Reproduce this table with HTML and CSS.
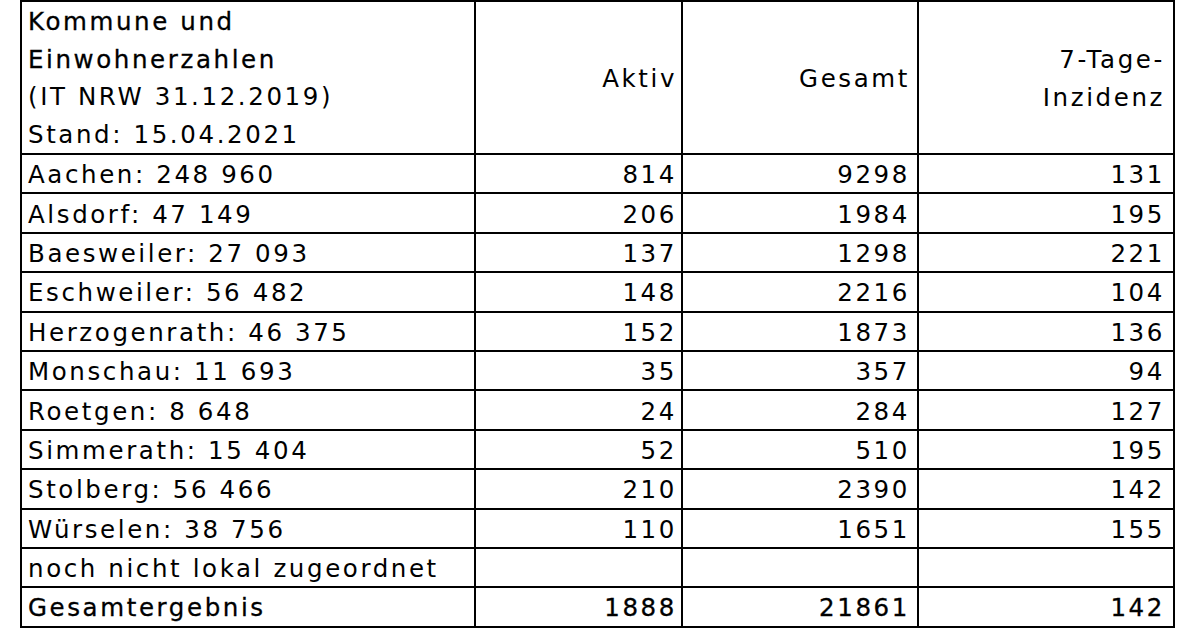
FILE: index.html
```html
<!DOCTYPE html>
<html lang="de">
<head>
<meta charset="utf-8">
<title>Corona-Fälle StädteRegion Aachen</title>
<link rel="stylesheet" href="styles.css">
</head>
<body>
<table class="cases">
  <colgroup>
    <col class="c-name">
    <col class="c-aktiv">
    <col class="c-gesamt">
    <col class="c-inz">
  </colgroup>
  <thead>
    <tr class="head">
      <th class="name"><span class="strong">Kommune und<br>Einwohnerzahlen</span><br>(IT NRW 31.12.2019)<br>Stand: 15.04.2021</th>
      <th class="num">Aktiv</th>
      <th class="num">Gesamt</th>
      <th class="num">7-Tage-<br>Inzidenz</th>
    </tr>
  </thead>
  <tbody>
    <tr><td class="name">Aachen: 248 960</td><td class="num">814</td><td class="num">9298</td><td class="num">131</td></tr>
    <tr><td class="name">Alsdorf: 47 149</td><td class="num">206</td><td class="num">1984</td><td class="num">195</td></tr>
    <tr><td class="name">Baesweiler: 27 093</td><td class="num">137</td><td class="num">1298</td><td class="num">221</td></tr>
    <tr><td class="name">Eschweiler: 56 482</td><td class="num">148</td><td class="num">2216</td><td class="num">104</td></tr>
    <tr><td class="name">Herzogenrath: 46 375</td><td class="num">152</td><td class="num">1873</td><td class="num">136</td></tr>
    <tr><td class="name">Monschau: 11 693</td><td class="num">35</td><td class="num">357</td><td class="num">94</td></tr>
    <tr><td class="name">Roetgen: 8 648</td><td class="num">24</td><td class="num">284</td><td class="num">127</td></tr>
    <tr><td class="name">Simmerath: 15 404</td><td class="num">52</td><td class="num">510</td><td class="num">195</td></tr>
    <tr><td class="name">Stolberg: 56 466</td><td class="num">210</td><td class="num">2390</td><td class="num">142</td></tr>
    <tr><td class="name">Würselen: 38 756</td><td class="num">110</td><td class="num">1651</td><td class="num">155</td></tr>
    <tr><td class="name">noch nicht lokal zugeordnet</td><td class="num"></td><td class="num"></td><td class="num"></td></tr>
  </tbody>
  <tfoot>
    <tr class="total"><td class="name">Gesamtergebnis</td><td class="num">1888</td><td class="num">21861</td><td class="num">142</td></tr>
  </tfoot>
</table>
</body>
</html>
```

FILE: styles.css
```css
html, body {
  margin: 0;
  padding: 0;
  background: #ffffff;
}

body {
  font-family: "DejaVu Sans", "Liberation Sans", sans-serif;
  font-size: 24.5px;
  letter-spacing: 2.6px;
  color: #000000;
}

.cases {
  border-collapse: collapse;
  table-layout: fixed;
  width: 1153px;
  margin: 0 0 0 20px;
  border: 2px solid #000;
}

.c-name { width: 454px; }
.c-aktiv { width: 207px; }
.c-gesamt { width: 236px; }
.c-inz { width: 256px; }

.cases th,
.cases td {
  border: 2px solid #000;
  padding: 3px 5px 0 6px;
  height: 39.4px;
  box-sizing: border-box;
  font-weight: normal;
  line-height: 30px;
  white-space: nowrap;
  vertical-align: middle;
  overflow: hidden;
}

.cases td:nth-child(2),
.cases th:nth-child(2) {
  padding-right: 4px;
}

.cases td:nth-child(3),
.cases th:nth-child(3) {
  padding-right: 7px;
}

.cases td:nth-child(4),
.cases th:nth-child(4) {
  padding-right: 8px;
}

.cases .head th {
  height: 152px;
  line-height: 38px;
  padding-top: 2px;
}

.cases .head th.name {
  padding-top: 1px;
  line-height: 37.5px;
  vertical-align: top;
}

.strong,
.total td {
  -webkit-text-stroke: 0.3px #000;
}

.cases .name {
  text-align: left;
}

.cases .num {
  text-align: right;
}
```
